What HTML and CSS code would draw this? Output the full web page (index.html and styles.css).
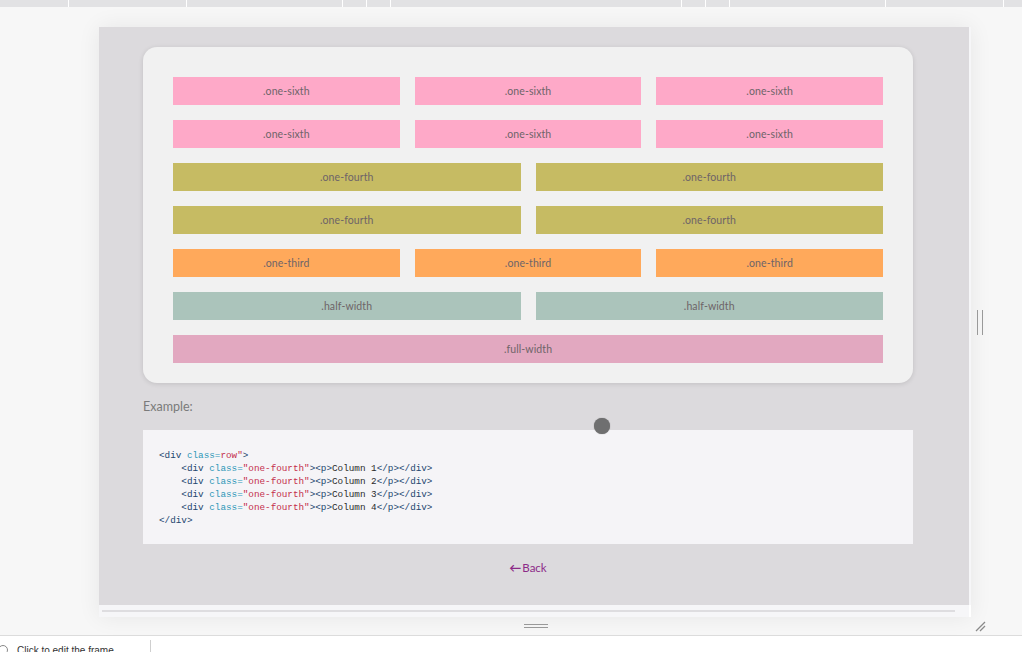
FILE: index.html
```html
<!DOCTYPE html>
<html>
<head>
<meta charset="utf-8">
<link rel="stylesheet" href="styles.css">
</head>
<body>
<div class="topbar">
  <span class="seg" style="width:68px"></span><span class="seg" style="width:117px"></span><span class="seg" style="width:155px"></span><span class="seg" style="width:23px"></span><span class="seg" style="width:23px"></span><span class="seg" style="width:290px"></span><span class="seg" style="width:23px"></span><span class="seg" style="width:23px"></span><span class="seg" style="width:155px"></span><span class="seg" style="width:117px"></span><span class="seg seg-last"></span>
</div>
<div class="stage">
  <div class="frame">
    <div class="viewport">
      <div class="card">
        <div class="row"><div class="bar pink">.one-sixth</div><div class="bar pink">.one-sixth</div><div class="bar pink">.one-sixth</div></div>
        <div class="row"><div class="bar pink">.one-sixth</div><div class="bar pink">.one-sixth</div><div class="bar pink">.one-sixth</div></div>
        <div class="row"><div class="bar olive">.one-fourth</div><div class="bar olive">.one-fourth</div></div>
        <div class="row"><div class="bar olive">.one-fourth</div><div class="bar olive">.one-fourth</div></div>
        <div class="row"><div class="bar orange">.one-third</div><div class="bar orange">.one-third</div><div class="bar orange">.one-third</div></div>
        <div class="row"><div class="bar sage">.half-width</div><div class="bar sage">.half-width</div></div>
        <div class="row"><div class="bar rose">.full-width</div></div>
      </div>
      <div class="label">Example:</div>
      <pre class="code"><span class="t">&lt;div</span> <span class="a">class=</span><span class="s">row"</span><span class="t">&gt;</span>
    <span class="t">&lt;div</span> <span class="a">class=</span><span class="s">"one-fourth"</span><span class="t">&gt;&lt;p&gt;</span>Column 1<span class="t">&lt;/p&gt;&lt;/div&gt;</span>
    <span class="t">&lt;div</span> <span class="a">class=</span><span class="s">"one-fourth"</span><span class="t">&gt;&lt;p&gt;</span>Column 2<span class="t">&lt;/p&gt;&lt;/div&gt;</span>
    <span class="t">&lt;div</span> <span class="a">class=</span><span class="s">"one-fourth"</span><span class="t">&gt;&lt;p&gt;</span>Column 3<span class="t">&lt;/p&gt;&lt;/div&gt;</span>
    <span class="t">&lt;div</span> <span class="a">class=</span><span class="s">"one-fourth"</span><span class="t">&gt;&lt;p&gt;</span>Column 4<span class="t">&lt;/p&gt;&lt;/div&gt;</span>
<span class="t">&lt;/div&gt;</span></pre>
      <div class="back"><a href="#"><span class="arrow">&larr;</span>Back</a></div>
    </div>
    <div class="hscroll"><div class="hscroll-line"></div></div>
  </div>
  <div class="handle-bottom"></div>
  <div class="handle-right"></div>
  <svg class="resize" width="12" height="12" viewBox="0 0 12 12"><path d="M2 11 L11 2 M6 11 L11 6" stroke="#8a8a8a" stroke-width="1.3" fill="none"/></svg>
  <div class="cursor-dot"></div>
</div>
<div class="statusbar">
  <div class="status-left"><span class="status-icon"></span><span class="status-text">Click to edit the frame</span></div>
</div>
</body>
</html>
```

FILE: styles.css
```css
html, body {
  margin: 0;
  padding: 0;
}
body {
  width: 1022px;
  height: 652px;
  overflow: hidden;
  background: #f7f7f7;
  font-family: Lato, "Open Sans", sans-serif;
}
.topbar {
  display: flex;
  gap: 1px;
  height: 7px;
  background: #ffffff;
}
.seg {
  display: block;
  height: 7px;
  background: #e2e2e4;
}
.seg-last {
  flex: 1;
}
.stage {
  position: relative;
  height: 629px;
  padding-top: 20px;
  box-sizing: border-box;
  border-bottom: 1px solid #dcdcdc;
}
.frame {
  margin-left: 99px;
  width: 872px;
  height: 590px;
  background: #f6f6f8;
  box-shadow: 0 0 22px rgba(0, 0, 0, 0.07);
  display: flex;
  flex-direction: column;
}
.viewport {
  width: 870px;
  height: 578px;
  background: #dcdadd;
  padding: 20px 56px 0 44px;
  box-sizing: border-box;
}
.card {
  width: 770px;
  height: 336px;
  box-sizing: border-box;
  background: #f1f1f1;
  border-radius: 14px;
  box-shadow: 0 1px 5px rgba(0, 0, 0, 0.12);
  padding: 30px 30px 20px;
  display: flex;
  flex-direction: column;
  gap: 15px;
}
.row {
  display: flex;
  gap: 15px;
}
.bar {
  flex: 1;
  height: 28px;
  line-height: 29px;
  text-align: center;
  font-size: 10.5px;
  color: #6e6468;
  letter-spacing: 0.1px;
}
.pink { background: #fea9c8; }
.olive { background: #c6bb63; }
.orange { background: #ffa95b; }
.sage { background: #abc4bb; }
.rose { background: #e2a8c0; }
.label {
  margin-top: 15px;
  height: 18px;
  line-height: 18px;
  font-size: 12.5px;
  color: #7a7a7a;
}
.code {
  margin: 14px 0 0;
  width: 770px;
  height: 114px;
  box-sizing: border-box;
  padding: 19px 16px 0;
  background: #f5f4f7;
  font-family: "Liberation Mono", "Courier New", monospace;
  font-size: 9.3px;
  line-height: 13px;
  color: #2a2a2a;
}
.t { color: #22456e; }
.a { color: #2f98b8; }
.s { color: #c42e4c; }
.back {
  margin-top: 16px;
  height: 16px;
  line-height: 16px;
  text-align: center;
  font-size: 11.5px;
}
.back a {
  color: #8c2a88;
  text-decoration: none;
}
.arrow {
  font-size: 12px;
  font-weight: bold;
  margin-right: 1px;
}
.hscroll {
  height: 12px;
  padding: 5px 14px 0 3px;
  box-sizing: border-box;
  border-right: 2px solid #ffffff;
}
.hscroll-line {
  height: 2px;
  background: #dedde0;
}
.handle-bottom {
  position: absolute;
  left: 524px;
  top: 617px;
  width: 24px;
  height: 4px;
  border-top: 1px solid #999999;
  border-bottom: 1px solid #999999;
  box-sizing: border-box;
}
.handle-right {
  position: absolute;
  left: 977px;
  top: 303px;
  width: 6px;
  height: 25px;
  border-left: 1px solid #999999;
  border-right: 1px solid #999999;
  box-sizing: border-box;
}
.resize {
  position: absolute;
  left: 974px;
  top: 613px;
}
.cursor-dot {
  position: absolute;
  left: 594px;
  top: 411px;
  width: 16px;
  height: 16px;
  border-radius: 50%;
  background: #6f6f70;
  box-shadow: 0 0 1px #6f6f70;
}
.statusbar {
  height: 16px;
  background: #ffffff;
  overflow: hidden;
}
.status-left {
  width: 151px;
  height: 16px;
  border-right: 1px solid #cfcfcf;
  box-sizing: border-box;
  margin-top: 4px;
  display: flex;
  align-items: flex-start;
  gap: 9px;
  padding-top: 5px;
}
.status-icon {
  width: 8px;
  height: 8px;
  border: 1px solid #888;
  border-radius: 50%;
  margin-left: -2px;
}
.status-text {
  font-family: "Liberation Sans", Arial, sans-serif;
  font-size: 10px;
  color: #333;
  line-height: 12px;
}
```
